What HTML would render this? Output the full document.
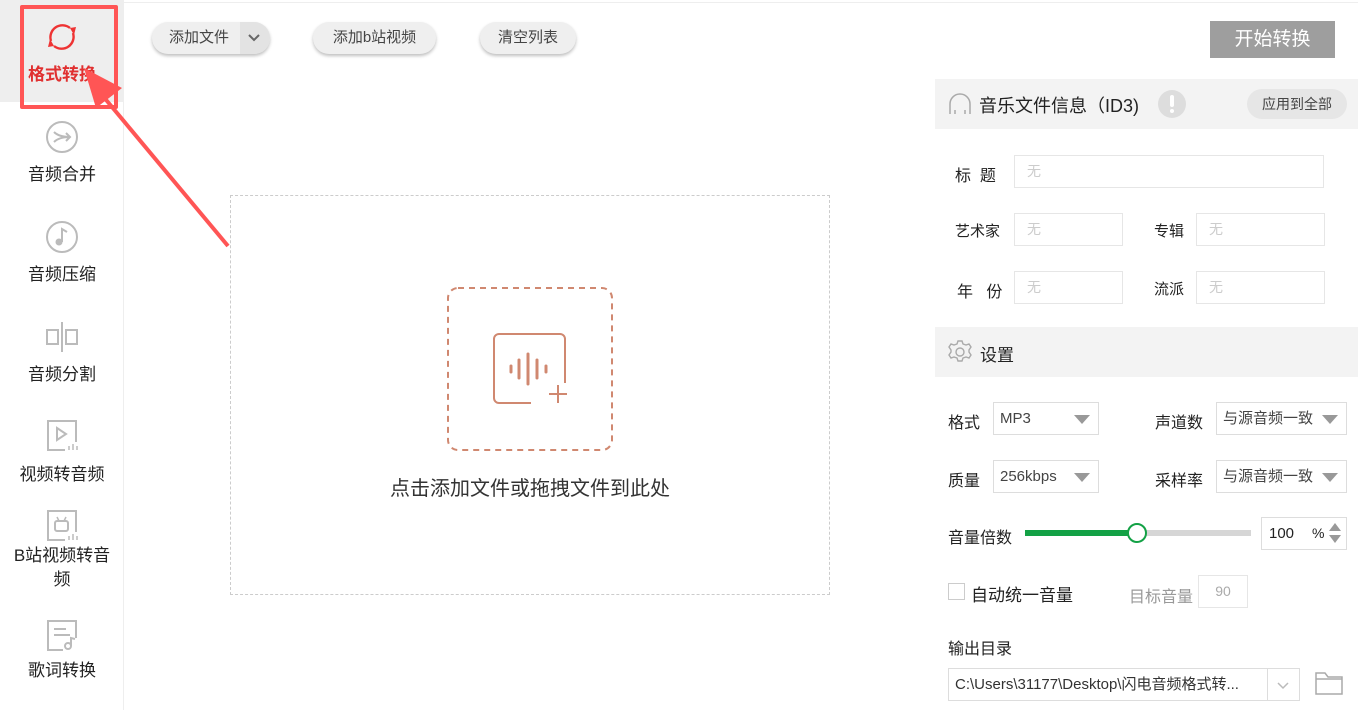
<!DOCTYPE html>
<html><head><meta charset="utf-8"><style>
*{margin:0;padding:0;box-sizing:border-box}
body{width:1358px;height:710px;overflow:hidden;background:#fff;font-family:"Liberation Sans","Noto Sans CJK SC",sans-serif;color:#222;position:relative}
.a{position:absolute}
.side{left:0;top:0;width:124px;height:710px;border-right:1px solid #eee}
.item{position:absolute;left:0;width:124px;text-align:center;font-size:17px;color:#222}
.item svg{display:block;margin:0 auto}
.btn{position:absolute;height:32px;border-radius:16px;background:#efefef;box-shadow:0 2px 3px rgba(0,0,0,.25);font-size:15px;color:#444;line-height:32px;text-align:center}
.lbl{position:absolute;font-size:15px;color:#222}
.inp{position:absolute;border:1px solid #e6e6e6;height:33px;font-size:14px;color:#ccc;line-height:31px;padding-left:12px}
.sel{position:absolute;border:1px solid #ddd;height:33px;font-size:15px;color:#444;line-height:31px;padding-left:6px}
.sel:after{content:"";position:absolute;right:8px;top:12px;border-left:8px solid transparent;border-right:8px solid transparent;border-top:9px solid #999}
</style></head><body>
<div class="a" style="left:124px;top:2px;width:1234px;height:1px;background:#eee"></div>
<div class="a side"></div>
<div class="a" style="left:0;top:0;width:124px;height:102px;background:#eee"></div>
<div class="item" style="top:20px;color:#e03030;font-weight:bold">
<svg width="34" height="34" viewBox="0 0 34 34"><path d="M6 21 A12 12 0 0 1 25 8" fill="none" stroke="#e33" stroke-width="2.4"/><path d="M28 13 A12 12 0 0 1 9 26" fill="none" stroke="#e33" stroke-width="2.4"/><path d="M29 15 L25 8 L31 7Z" fill="#e33"/><path d="M5 19 L9 26 L3 27Z" fill="#e33"/></svg>
<div style="margin-top:6px">格式转换</div></div>
<div class="item" style="top:120px"><svg width="34" height="34" viewBox="0 0 34 34"><circle cx="17" cy="17" r="15" fill="none" stroke="#bbb" stroke-width="2"/><path d="M9 12 Q14 17 25 17 M9 22 Q14 17 25 17 M21 13 L25 17 L21 21" fill="none" stroke="#bbb" stroke-width="2"/></svg><div style="margin-top:6px">音频合并</div></div>
<div class="item" style="top:220px"><svg width="34" height="34" viewBox="0 0 34 34"><circle cx="17" cy="17" r="15" fill="none" stroke="#bbb" stroke-width="2"/><circle cx="14" cy="22" r="3.5" fill="#bbb"/><path d="M17 22 V9 L22 12" fill="none" stroke="#bbb" stroke-width="2"/></svg><div style="margin-top:6px">音频压缩</div></div>
<div class="item" style="top:320px"><svg width="34" height="34" viewBox="0 0 34 34"><rect x="2" y="10" width="11" height="14" fill="none" stroke="#bbb" stroke-width="2"/><rect x="21" y="10" width="11" height="14" fill="none" stroke="#bbb" stroke-width="2"/><path d="M17 2 V32" stroke="#bbb" stroke-width="2"/></svg><div style="margin-top:6px">音频分割</div></div>
<div class="item" style="top:418px"><svg width="34" height="36" viewBox="0 0 34 36"><path d="M20 32 H3 V3 H31 V24" fill="none" stroke="#bbb" stroke-width="2"/><path d="M12 10 L21 16 L12 22Z" fill="none" stroke="#bbb" stroke-width="2"/><path d="M24 28v4M28 26v6M32 28v4" stroke="#bbb" stroke-width="1.5"/></svg><div style="margin-top:6px">视频转音频</div></div>
<div class="item" style="top:508px;line-height:24px"><svg width="34" height="36" viewBox="0 0 34 36"><path d="M20 32 H3 V3 H31 V24" fill="none" stroke="#bbb" stroke-width="2"/><rect x="10" y="13" width="13" height="10" rx="2" fill="none" stroke="#bbb" stroke-width="2"/><path d="M12 9l2 4M21 9l-2 4" stroke="#bbb" stroke-width="1.5"/><path d="M24 28v4M28 26v6M32 28v4" stroke="#bbb" stroke-width="1.5"/></svg><div>B站视频转音<br>频</div></div>
<div class="item" style="top:618px"><svg width="34" height="36" viewBox="0 0 34 36"><path d="M18 32 H3 V3 H31 V20" fill="none" stroke="#bbb" stroke-width="2"/><path d="M9 11h12M9 17h16" stroke="#bbb" stroke-width="2"/><circle cx="23" cy="28" r="3" fill="none" stroke="#bbb" stroke-width="2"/><path d="M26 28 V20 L30 21" fill="none" stroke="#bbb" stroke-width="2"/></svg><div style="margin-top:2px">歌词转换</div></div>
<div class="a" style="left:20px;top:5px;width:98px;height:104px;border:4px solid #f55;border-radius:2px"></div>
<svg class="a" style="left:0;top:0" width="240" height="260"><path d="M228 246 L102 95" stroke="#f55" stroke-width="4"/><path d="M84 68 L122 88 L96 108Z" fill="#f55"/></svg>

<div class="btn" style="left:152px;top:22px;width:118px;text-align:left;padding-left:17px">添加文件<span style="position:absolute;right:0;top:0;width:30px;height:32px;background:#e3e3e3;border-radius:0 16px 16px 0"></span><svg class="a" style="right:10px;top:12px" width="12" height="8"><path d="M1 1l5 5 5-5" fill="none" stroke="#666" stroke-width="2"/></svg></div>
<div class="btn" style="left:313px;top:22px;width:123px">添加b站视频</div>
<div class="btn" style="left:480px;top:22px;width:96px">清空列表</div>
<div class="a" style="left:1210px;top:21px;width:125px;height:37px;background:#9e9e9e;color:#fff;font-size:19px;line-height:37px;text-align:center">开始转换</div>

<div class="a" style="left:230px;top:195px;width:600px;height:400px;border:1px dashed #ccc"></div>
<svg class="a" style="left:446px;top:286px" width="168" height="166"><rect x="2" y="2" width="164" height="162" rx="10" fill="none" stroke="#d08870" stroke-width="2" stroke-dasharray="6 5"/><path d="M85 117 H53 a5 5 0 0 1 -5 -5 V53 a5 5 0 0 1 5 -5 H114 a5 5 0 0 1 5 5 V97" fill="none" stroke="#d08870" stroke-width="2"/><path d="M65 80v6M73 74v18M82 68v30M91 74v18M100 80v6" stroke="#d08870" stroke-width="3" stroke-linecap="round"/><path d="M103 108h18M112 99v18" stroke="#d08870" stroke-width="2"/></svg>
<div class="a" style="left:230px;top:472px;width:600px;text-align:center;font-size:20px;color:#333">点击添加文件或拖拽文件到此处</div>

<div class="a" style="left:935px;top:79px;width:423px;height:50px;background:#f3f3f3"></div>
<svg class="a" style="left:947px;top:90px" width="26" height="26"><path d="M3 24 V14 A10 10 0 0 1 23 14 V24" fill="none" stroke="#aaa" stroke-width="1.5"/><path d="M8 20v4M18 20v4" stroke="#aaa" stroke-width="1.5"/></svg>
<div class="a" style="left:979px;top:92px;font-size:18px">音乐文件信息（ID3)</div>
<div class="a" style="left:1158px;top:90px;width:28px;height:28px;border-radius:50%;background:#ddd"><div style="position:absolute;left:12px;top:5px;width:4px;height:12px;background:#fff;border-radius:2px"></div><div style="position:absolute;left:12px;top:19px;width:4px;height:4px;background:#fff;border-radius:2px"></div></div>
<div class="a" style="left:1247px;top:89px;width:100px;height:30px;border-radius:15px;background:#e6e6e6;font-size:14px;line-height:30px;text-align:center;color:#444">应用到全部</div>

<div class="lbl" style="left:955px;top:162px;font-size:16px">标&nbsp;&nbsp;题</div>
<div class="inp" style="left:1014px;top:155px;width:310px">无</div>
<div class="lbl" style="left:955px;top:220px">艺术家</div>
<div class="inp" style="left:1014px;top:213px;width:109px">无</div>
<div class="lbl" style="left:1154px;top:220px">专辑</div>
<div class="inp" style="left:1196px;top:213px;width:129px">无</div>
<div class="lbl" style="left:957px;top:278px;font-size:16px">年&nbsp;&nbsp;&nbsp;份</div>
<div class="inp" style="left:1014px;top:271px;width:109px">无</div>
<div class="lbl" style="left:1154px;top:278px">流派</div>
<div class="inp" style="left:1196px;top:271px;width:129px">无</div>

<div class="a" style="left:935px;top:327px;width:423px;height:50px;background:#f3f3f3"></div>
<svg class="a" style="left:947px;top:339px" width="26" height="26" viewBox="0 0 26 26"><path d="M11 2h4l1 3 3 1 3-1 2 3-2 3v2l2 3-2 3-3-1-3 1-1 3h-4l-1-3-3-1-3 1-2-3 2-3v-2l-2-3 2-3 3 1 3-1z" fill="none" stroke="#aaa" stroke-width="1.4"/><circle cx="13" cy="13" r="4" fill="none" stroke="#aaa" stroke-width="1.4"/></svg>
<div class="a" style="left:980px;top:341px;font-size:17px">设置</div>

<div class="lbl" style="left:948px;top:409px;font-size:16px">格式</div>
<div class="sel" style="left:993px;top:402px;width:106px">MP3</div>
<div class="lbl" style="left:1155px;top:409px;font-size:16px">声道数</div>
<div class="sel" style="left:1216px;top:402px;width:131px">与源音频一致</div>
<div class="lbl" style="left:948px;top:467px;font-size:16px">质量</div>
<div class="sel" style="left:993px;top:460px;width:106px">256kbps</div>
<div class="lbl" style="left:1155px;top:467px;font-size:16px">采样率</div>
<div class="sel" style="left:1216px;top:460px;width:131px">与源音频一致</div>

<div class="lbl" style="left:948px;top:524px;font-size:16px">音量倍数</div>
<div class="a" style="left:1025px;top:530px;width:226px;height:6px;background:#d6d6d6"></div>
<div class="a" style="left:1025px;top:530px;width:112px;height:6px;background:#13a145"></div>
<div class="a" style="left:1127px;top:523px;width:20px;height:20px;border-radius:50%;background:#fff;border:2.5px solid #13a145"></div>
<div class="a" style="left:1261px;top:517px;width:86px;height:33px;border:1px solid #ddd;font-size:15px;line-height:31px;padding-left:7px">100<span style="position:absolute;left:50px;font-size:14px">%</span><span style="position:absolute;right:5px;top:5px;border-left:6px solid transparent;border-right:6px solid transparent;border-bottom:8px solid #999"></span><span style="position:absolute;right:5px;top:17px;border-left:6px solid transparent;border-right:6px solid transparent;border-top:8px solid #999"></span></div>

<div class="a" style="left:948px;top:583px;width:17px;height:17px;border:1px solid #ccc"></div>
<div class="lbl" style="left:971px;top:581px;font-size:17px">自动统一音量</div>
<div class="lbl" style="left:1129px;top:583px;color:#999;font-size:16px">目标音量</div>
<div class="a" style="left:1198px;top:575px;width:50px;height:33px;border:1px solid #e6e6e6;font-size:14px;color:#aaa;text-align:center;line-height:31px">90</div>

<div class="lbl" style="left:948px;top:635px;font-size:16px">输出目录</div>
<div class="a" style="left:948px;top:668px;width:352px;height:33px;border:1px solid #ddd;font-size:15px;line-height:31px;padding-left:6px;color:#333">C:\Users\31177\Desktop\闪电音频格式转...<span style="position:absolute;right:0;top:0;width:32px;height:31px;border-left:1px solid #ddd"></span><svg class="a" style="right:10px;top:13px" width="12" height="8"><path d="M1 1l5 5 5-5" fill="none" stroke="#bbb" stroke-width="1.5"/></svg></div>
<svg class="a" style="left:1314px;top:670px" width="30" height="26"><path d="M2 24V3h9l3 4h14v17z M2 9h26" fill="none" stroke="#aaa" stroke-width="1.5"/></svg>
</body></html>
